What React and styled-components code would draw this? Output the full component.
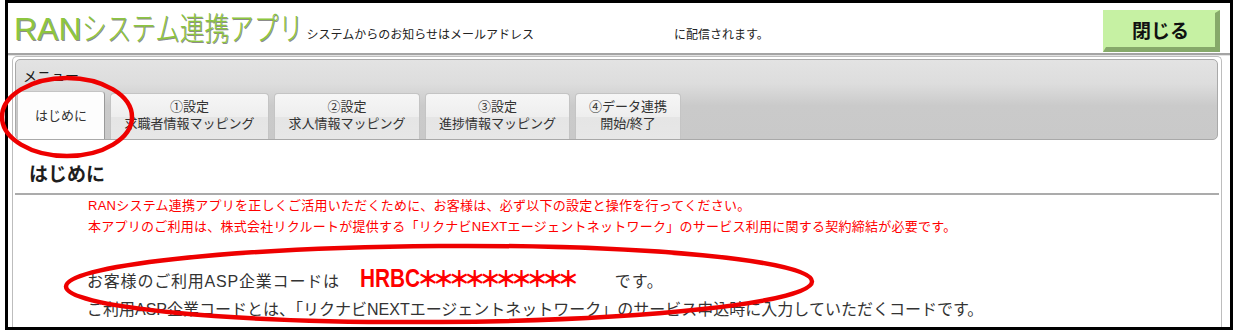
import React from "react";
import styled, { createGlobalStyle } from "styled-components";

const JP = `"Liberation Sans", "Noto Sans CJK JP", sans-serif`;

const GlobalStyle = createGlobalStyle`
  html, body {
    margin: 0;
    padding: 0;
    background: #fff;
    overflow: hidden;
  }
  body {
    font-family: ${JP};
    color: #333;
  }
`;

const Page = styled.div`
  position: relative;
  width: 1233px;
  height: 330px;
`;

const Frame = styled.div`
  margin-left: 5px;
  width: 1228px;
  height: 330px;
  box-sizing: border-box;
  border: 3px solid #000;
  background: #fff;
  display: flex;
  flex-direction: column;
`;

const Header = styled.header`
  height: 50px;
  flex-shrink: 0;
  display: flex;
  align-items: flex-end;
  padding-left: 6px;
  border-bottom: 2px solid #a4a4a4;
  box-shadow: 0 1px 0 #e2e2e2;
`;

const Title = styled.h1`
  margin: 0 0 6px;
  font-family: ${JP};
  font-size: 32px;
  font-weight: normal;
  line-height: 36px;
  color: #8dc63f;
  text-shadow: 1px 1px 0 #8c8c8c;
  white-space: nowrap;
`;

const TitleKana = styled.span`
  display: inline-block;
  font-weight: 300;
  transform: scaleX(0.77);
  transform-origin: left center;
  margin-right: -66px;
`;

const Notice = styled.p`
  margin: 0 0 10px 4px;
  font-size: 12px;
  line-height: 16px;
  color: #222;
  white-space: nowrap;
  display: flex;
`;

const EmailSlot = styled.span`
  display: inline-block;
  width: 140px;
`;

const CloseButton = styled.button`
  margin: 0 10px 1px auto;
  width: 117px;
  height: 42px;
  box-sizing: border-box;
  border-style: solid;
  border-width: 3px 5px 5px 3px;
  border-color: #c6f1a3 #86a96a #86a96a #c6f1a3;
  background: #c6f1a3;
  font-family: "Noto Sans CJK JP", sans-serif;
  font-size: 19px;
  font-weight: bold;
  color: #111;
  padding: 0 0 2px;
  cursor: pointer;
`;

const Body = styled.main`
  flex: 1;
  margin: 1px 8px 0 4px;
  border: 1px solid #bdbdbd;
  border-bottom: none;
  border-radius: 5px 5px 0 0;
  display: flex;
  flex-direction: column;
`;

const MenuPanel = styled.nav`
  margin: 2px 3px 0 2px;
  height: 81px;
  box-sizing: border-box;
  border: 1px solid #a9a9a9;
  border-radius: 5px;
  background: linear-gradient(#e3e3e3 0%, #dddddd 30%, #cacaca 58%, #c9c9c9 100%);
  display: flex;
  flex-direction: column;
`;

const MenuLabel = styled.div`
  padding: 6px 0 0 7px;
  font-family: "Noto Sans CJK JP", sans-serif;
  font-size: 14px;
  line-height: 18px;
  color: #1a1a1a;
`;

const TabRow = styled.div`
  margin-top: auto;
  display: flex;
  align-items: flex-end;
  gap: 5px;
  padding-left: 1px;
`;

const Tab = styled.div`
  width: ${(p) => p.$width}px;
  height: ${(p) => (p.$active ? 48 : 46)}px;
  box-sizing: border-box;
  border: 1px solid #c4c4c4;
  border-bottom: none;
  border-right-color: ${(p) => (p.$active ? "#9a9a9a" : "#c4c4c4")};
  border-radius: 4px 4px 0 0;
  background: ${(p) =>
    p.$active
      ? "#fdfdfd"
      : "linear-gradient(#f6f6f6 0%, #eeeeee 50%, #e5e5e5 52%, #e7e7e7 100%)"};
  display: flex;
  flex-direction: column;
  align-items: center;
  justify-content: center;
  font-size: 13px;
  line-height: 17px;
  color: #333;
  white-space: nowrap;
  padding-bottom: ${(p) => (p.$active ? 0 : 3)}px;
`;

const Section = styled.section`
  padding: 0 2px;
`;

const Heading = styled.h2`
  margin: 21px 0 0;
  padding: 0 0 8px 14px;
  font-family: "Noto Sans CJK JP", sans-serif;
  font-size: 19px;
  line-height: 24px;
  font-weight: bold;
  color: #1e1e1e;
  border-bottom: 2px solid #ababab;
`;

const Warning = styled.p`
  margin: 0;
  padding: 0 0 0 73px;
  font-size: 13px;
  line-height: 21px;
  letter-spacing: 0.25px;
  color: #f00;
  white-space: nowrap;
`;

const Lead = styled.p`
  margin: 26px 0 0;
  padding-left: 72px;
  font-size: 16px;
  line-height: 28px;
  letter-spacing: 0.8px;
  color: #333;
  white-space: nowrap;
  display: flex;
  align-items: baseline;
`;

const Note = styled(Lead)`
  margin-top: 0;
  letter-spacing: 0;
`;

const CodeValue = styled.span`
  display: inline-flex;
  align-items: baseline;
  width: 218px;
  margin: 0 37px 0 20px;
  color: #f00;
  font-weight: bold;
  letter-spacing: 0;
`;

const CodePrefix = styled.span`
  display: inline-block;
  font-family: "Liberation Sans", sans-serif;
  font-size: 26px;
  transform: scaleX(0.8);
  transform-origin: left center;
  margin-right: -18px;
`;

const CodeMask = styled.span`
  font-family: "Noto Sans CJK JP", sans-serif;
  font-size: 22px;
  font-weight: 900;
  letter-spacing: -6.4px;
`;

const Annotations = styled.svg`
  position: absolute;
  top: 0;
  left: 0;
  pointer-events: none;
`;

const tabs = [
  { width: 88, lines: ["はじめに"], active: true },
  { width: 159, lines: ["①設定", "求職者情報マッピング"] },
  { width: 146, lines: ["②設定", "求人情報マッピング"] },
  { width: 145, lines: ["③設定", "進捗情報マッピング"] },
  { width: 106, lines: ["④データ連携", "開始/終了"] },
];

export default function App() {
  return (
    <Page>
      <GlobalStyle />
      <Frame>
        <Header>
          <Title>
            RAN<TitleKana>システム連携アプリ</TitleKana>
          </Title>
          <Notice>
            システムからのお知らせはメールアドレス
            <EmailSlot />
            に配信されます。
          </Notice>
          <CloseButton type="button">閉じる</CloseButton>
        </Header>
        <Body>
          <MenuPanel>
            <MenuLabel>メニュー</MenuLabel>
            <TabRow>
              {tabs.map((t) => (
                <Tab key={t.lines.join()} $width={t.width} $active={t.active}>
                  {t.lines.map((l) => (
                    <span key={l}>{l}</span>
                  ))}
                </Tab>
              ))}
            </TabRow>
          </MenuPanel>
          <Section>
            <Heading>はじめに</Heading>
            <Warning>
              RANシステム連携アプリを正しくご活用いただくために、お客様は、必ず以下の設定と操作を行ってください。
            </Warning>
            <Warning>
              本アプリのご利用は、株式会社リクルートが提供する「リクナビNEXTエージェントネットワーク」のサービス利用に関する契約締結が必要です。
            </Warning>
            <Lead>
              お客様のご利用ASP企業コードは
              <CodeValue>
                <CodePrefix>HRBC</CodePrefix>
                <CodeMask>＊＊＊＊＊＊＊＊＊＊</CodeMask>
              </CodeValue>
              です。
            </Lead>
            <Note>
              ご利用ASP企業コードとは、「リクナビNEXTエージェントネットワーク」のサービス申込時に入力していただくコードです。
            </Note>
          </Section>
        </Body>
      </Frame>
      <Annotations width="1233" height="330" viewBox="0 0 1233 330">
        <ellipse cx="67" cy="117" rx="65" ry="39" fill="none" stroke="#ee0000" strokeWidth="4.5" />
        <ellipse
          cx="439"
          cy="284"
          rx="373"
          ry="38"
          fill="none"
          stroke="#ee0000"
          strokeWidth="4.5"
          transform="rotate(-0.4 439 284)"
        />
      </Annotations>
    </Page>
  );
}
